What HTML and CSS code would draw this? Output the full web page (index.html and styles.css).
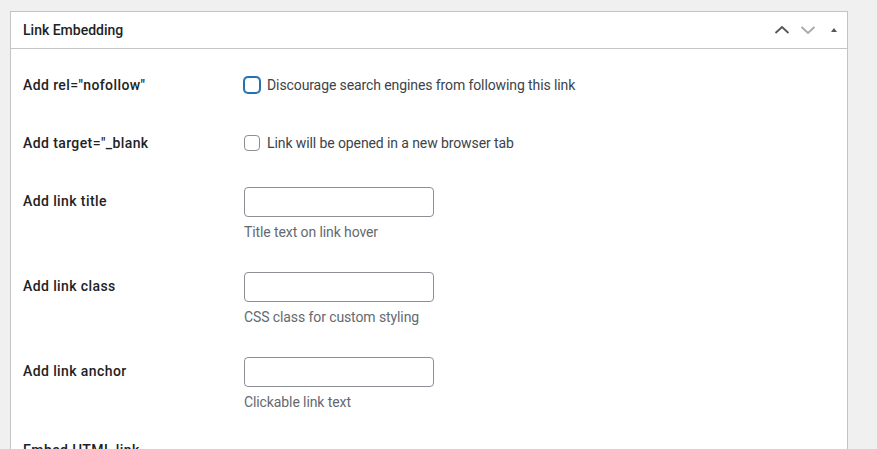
FILE: index.html
```html
<!DOCTYPE html>
<html lang="en">
<head>
    <meta charset="UTF-8">
    <meta name="viewport" content="width=device-width, initial-scale=1.0">
    <title>Link Embedding</title>
    <link rel="stylesheet" href="styles.css">
</head>
<body>
    <div class="postbox">
        <div class="postbox-header">
            <h2 class="hndle">Link Embedding</h2>
            <div class="handle-actions">
                <button class="handle-btn" aria-label="Move up">
                    <svg width="16" height="16" viewBox="0 0 16 16"><path d="M1.5 11 L8 5 L14.5 11" fill="none" stroke="#50575e" stroke-width="1.8"/></svg>
                </button>
                <button class="handle-btn" aria-label="Move down">
                    <svg width="16" height="16" viewBox="0 0 16 16"><path d="M1.5 5 L8 11 L14.5 5" fill="none" stroke="#a7aaad" stroke-width="1.8"/></svg>
                </button>
                <button class="handle-btn" aria-label="Toggle panel">
                    <svg width="10" height="10" viewBox="0 0 10 10"><path d="M2 7 L5 3 L8 7 Z" fill="#50575e"/></svg>
                </button>
            </div>
        </div>

        <div class="inside">
            <div class="form-row check-row">
                <div class="form-label">Add rel="nofollow"</div>
                <div class="form-field">
                    <label class="check-label"><input type="checkbox" class="checkbox focused"> Discourage search engines from following this link</label>
                </div>
            </div>

            <div class="form-row check-row">
                <div class="form-label">Add target="_blank</div>
                <div class="form-field">
                    <label class="check-label"><input type="checkbox" class="checkbox"> Link will be opened in a new browser tab</label>
                </div>
            </div>

            <div class="form-row">
                <div class="form-label">Add link title</div>
                <div class="form-field">
                    <input type="text" class="text-input">
                    <p class="description">Title text on link hover</p>
                </div>
            </div>

            <div class="form-row">
                <div class="form-label">Add link class</div>
                <div class="form-field">
                    <input type="text" class="text-input">
                    <p class="description">CSS class for custom styling</p>
                </div>
            </div>

            <div class="form-row">
                <div class="form-label">Add link anchor</div>
                <div class="form-field">
                    <input type="text" class="text-input">
                    <p class="description">Clickable link text</p>
                </div>
            </div>

            <div class="form-row last-row">
                <div class="form-label">Embed HTML link</div>
                <div class="form-field"></div>
            </div>
        </div>
    </div>
</body>
</html>
```

FILE: styles.css
```css
body {
    margin: 0;
    background-color: #f0f0f1;
    font-family: Roboto, sans-serif;
    font-size: 14px;
    color: #3c434a;
    overflow: hidden;
}

.postbox {
    box-sizing: border-box;
    width: 838px;
    margin: 11px 0 0 10px;
    background-color: #fff;
    border: 1px solid #c3c4c7;
}

.postbox-header {
    display: flex;
    align-items: center;
    justify-content: space-between;
    height: 36px;
    border-bottom: 1px solid #c3c4c7;
    padding-left: 12px;
}

.hndle {
    margin: 0;
    font-size: 14px;
    font-weight: 500;
    color: #1d2327;
}

.handle-actions {
    display: flex;
    align-items: center;
}

.handle-btn {
    display: flex;
    align-items: center;
    justify-content: center;
    width: 26px;
    height: 36px;
    padding: 0;
    border: none;
    background: none;
}

.inside {
    padding: 7px 12px 0;
}

.form-row {
    display: grid;
    grid-template-columns: 221px 1fr;
}

.form-label {
    padding: 20px 0;
    line-height: 18px;
    font-weight: 500;
    letter-spacing: 0.4px;
    color: #1d2327;
}

.form-field {
    padding: 15px 0;
    letter-spacing: -0.1px;
}

.check-row .form-field {
    padding: 21px 0;
}

.last-row .form-label {
    padding-top: 14px;
}

.check-label {
    display: flex;
    align-items: center;
    line-height: 16px;
}

.checkbox {
    appearance: none;
    box-sizing: border-box;
    width: 16px;
    height: 16px;
    margin: 0 7px 0 0;
    border: 1px solid #8c8f94;
    border-radius: 4px;
    background: #fff;
}

.checkbox.focused {
    border-color: #2271b1;
    box-shadow: 0 0 0 1px #2271b1;
}

.text-input {
    display: block;
    box-sizing: border-box;
    width: 190px;
    height: 30px;
    border: 1px solid #8c8f94;
    border-radius: 4px;
    background: #fff;
}

.description {
    margin: 5px 0 0;
    line-height: 20px;
    color: #646970;
}
```
